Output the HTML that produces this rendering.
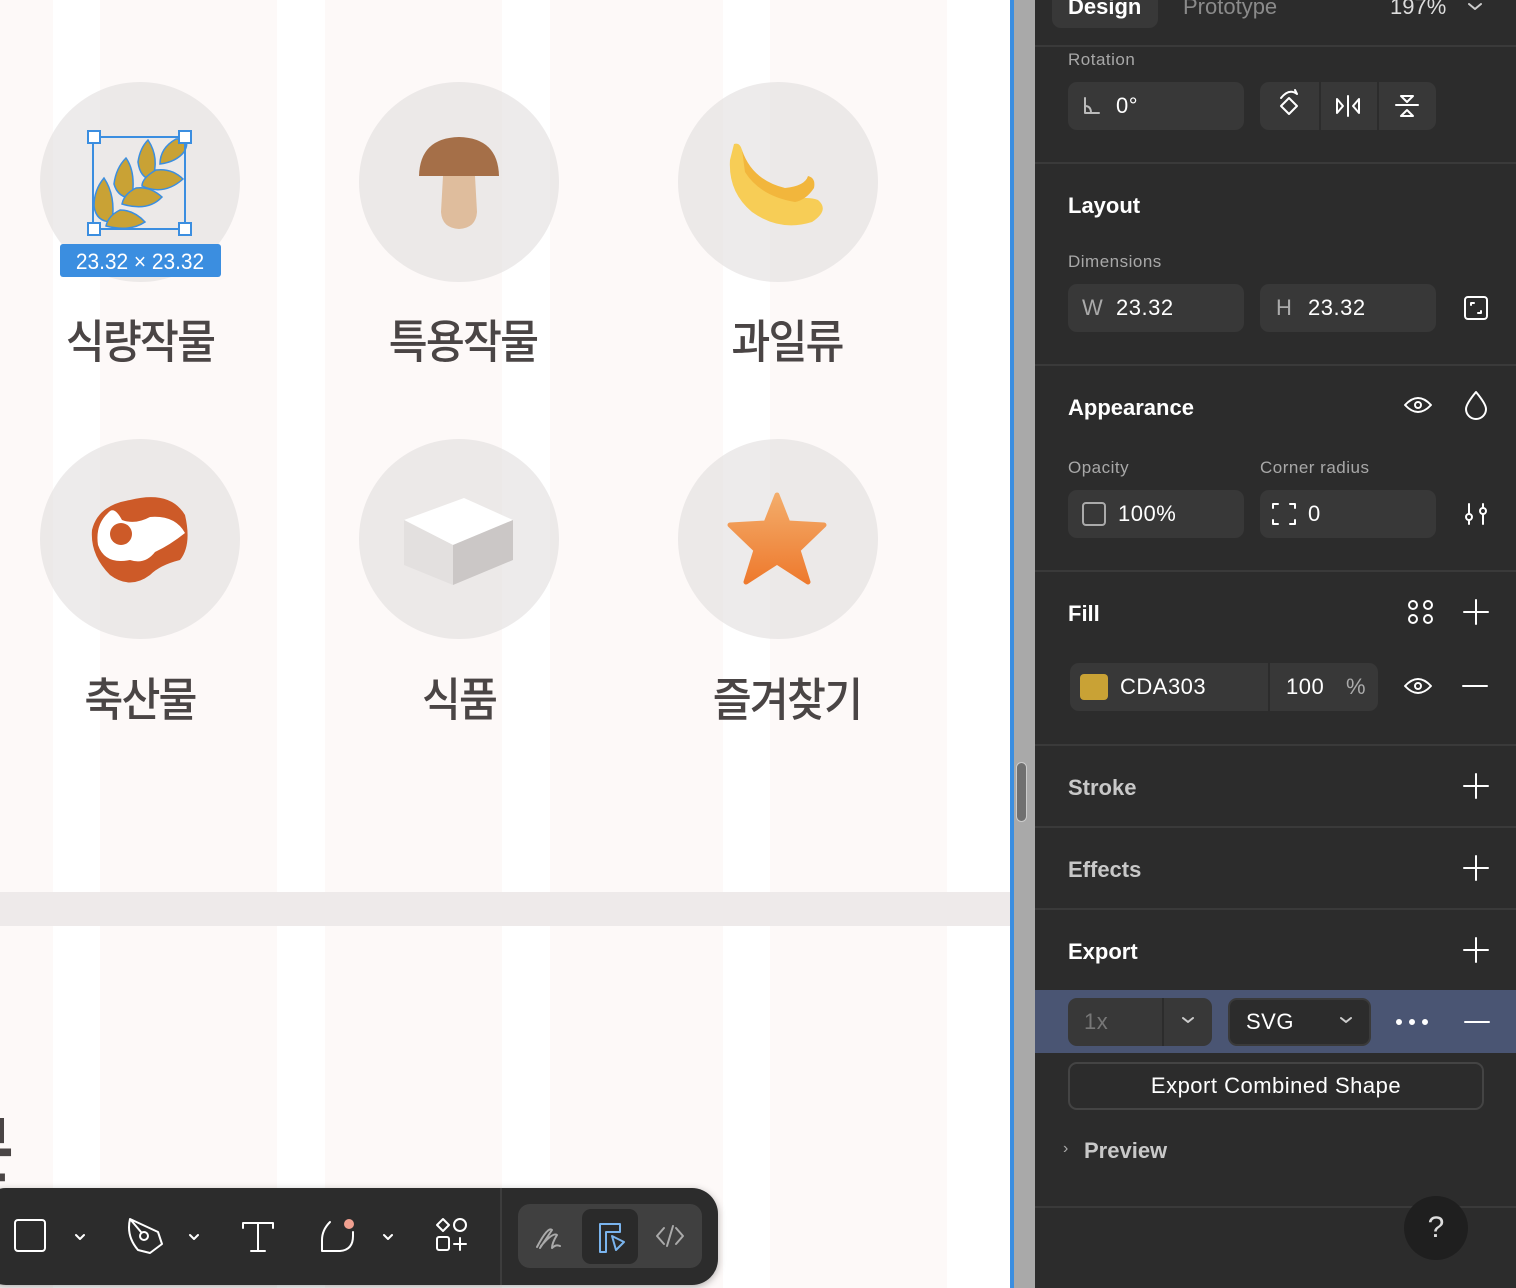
<!DOCTYPE html>
<html><head><meta charset="utf-8"><style>
*{margin:0;padding:0;box-sizing:border-box}
body{width:1516px;height:1288px;overflow:hidden;position:relative;background:#fdf9f8;font-family:"Liberation Sans",sans-serif}
.a{position:absolute}
.w{background:#fff;top:0;height:1288px}
.circ{position:absolute;width:200px;height:200px;border-radius:50%;background:rgba(225,222,222,.6)}
.kr{position:absolute;font-family:"Liberation Sans","Noto Sans CJK KR",sans-serif;font-size:46px;color:#4a4545;transform:scaleX(.92);text-align:center;width:300px;font-weight:500;letter-spacing:-2px}
.p{position:absolute;left:1035px;top:0;width:481px;height:1288px;background:#2c2c2c;color:#fff}
.hr{position:absolute;left:0;width:481px;height:2px;background:#3a3a3a}
.t{position:absolute;font-size:22px;font-weight:bold;color:#fff}
.lb{position:absolute;font-size:17px;color:#a8a8a8;letter-spacing:.5px}
.in{position:absolute;background:#383838;border-radius:9px;height:48px;font-size:22px;color:#fff;line-height:48px;letter-spacing:.5px}
svg{position:absolute;overflow:visible}
</style></head><body>
<div class="a w" style="left:53px;width:47px"></div>
<div class="a w" style="left:277px;width:48px"></div>
<div class="a w" style="left:502px;width:48px"></div>
<div class="a w" style="left:723px;width:47px"></div>
<div class="a w" style="left:947px;width:63px"></div>
<div class="a" style="left:0;top:892px;width:1010px;height:34px;background:#eeeaea"></div>

<div class="circ" style="left:40px;top:82px"></div>
<div class="circ" style="left:359px;top:82px"></div>
<div class="circ" style="left:678px;top:82px"></div>
<div class="circ" style="left:40px;top:439px"></div>
<div class="circ" style="left:359px;top:439px"></div>
<div class="circ" style="left:678px;top:439px"></div>

<svg style="left:0;top:0" width="1" height="1">
<g fill="#c9a235" stroke="#3b8ee0" stroke-width="1.5">
<path d="M176 139 Q192 138 184 152 Q176 162 160 164 Q160 148 176 139Z"/>
<path d="M148 140 Q160 158 152 180 Q140 178 138 162 Q140 148 148 140Z"/>
<path d="M183 179 Q172 168 156 170 Q142 178 142 186 Q164 196 183 179Z"/>
<path d="M126 158 Q136 172 132 198 Q118 198 114 184 Q116 168 126 158Z"/>
<path d="M162 197 Q150 186 136 188 Q124 194 122 204 Q148 212 162 197Z"/>
<path d="M104 178 Q116 196 112 222 Q96 222 94 206 Q94 190 104 178Z"/>
<path d="M145 222 Q134 210 120 210 Q108 216 106 226 Q130 232 145 222Z"/>
</g>
<rect x="93" y="137" width="92" height="92" fill="none" stroke="#3b8ee0" stroke-width="2"/>
<g fill="#fff" stroke="#3b8ee0" stroke-width="2"><rect x="88" y="131" width="12" height="12"/><rect x="179" y="131" width="12" height="12"/><rect x="88" y="223" width="12" height="12"/><rect x="179" y="223" width="12" height="12"/></g>
<rect x="60" y="244" width="161" height="33" rx="3" fill="#3b8ee0"/>
<text x="140" y="269" fill="#fff" font-size="22" text-anchor="middle" font-family="Liberation Sans" transform="translate(140 0) scale(.95 1) translate(-140 0)">23.32 × 23.32</text>
<path d="M419 176 Q420 138 459 137 Q498 138 499 176Z" fill="#a56f48"/>
<path d="M443 176 L475 176 L477 212 Q476 228 459 229 Q442 228 441 212Z" fill="#dfbd9d"/>
<path d="M734 144 Q740 142 742 150 Q748 188 790 200 Q808 196 818 200 Q830 210 812 222 Q780 232 752 212 Q728 192 730 160 Z" fill="#f7cd56"/>
<path d="M742 150 Q752 180 785 188 Q805 186 808 176 Q816 178 814 188 Q806 200 795 202 Q760 196 745 172Z" fill="#f2b63c"/>
<path d="M130 500 Q170 490 185 515 Q192 545 180 560 Q160 565 150 575 Q130 590 110 575 Q90 555 92 530 Q98 505 130 500Z" fill="#cd5a28"/>
<path d="M108 513 Q114 505 122 520 Q135 525 150 517 Q175 515 185 533 Q170 545 155 552 Q145 565 130 560 Q105 565 98 545 Q95 525 108 513Z" fill="#fff"/>
<circle cx="121" cy="534" r="11" fill="#cd5a28"/>
<path d="M404 520 L464 498 L513 520 L453 545Z" fill="#fff"/>
<path d="M404 520 L453 545 L453 585 L404 565Z" fill="#e3e0df"/>
<path d="M453 545 L513 520 L513 560 L453 585Z" fill="#cbc7c6"/>
<defs><linearGradient id="sg" x1="0" y1="0" x2="0" y2="1"><stop offset="0" stop-color="#f3ac6a"/><stop offset="1" stop-color="#ee7a2e"/></linearGradient></defs>
<path d="M777 495 L788 523 L824 525 L798 550 L808 582 L777 562 L746 582 L756 550 L730 525 L766 523Z" fill="url(#sg)" stroke="url(#sg)" stroke-width="5" stroke-linejoin="round"/>
</svg>

<div class="kr" style="left:-10px;top:306px">식량작물</div>
<div class="kr" style="left:313px;top:306px">특용작물</div>
<div class="kr" style="left:637px;top:306px">과일류</div>
<div class="kr" style="left:-10px;top:664px">축산물</div>
<div class="kr" style="left:309px;top:664px">식품</div>
<div class="kr" style="left:637px;top:664px">즐겨찾기</div>
<div class="kr" style="left:-180px;top:1092px;text-align:right;width:200px;font-size:72px;font-weight:bold">문</div>

<div class="a" style="left:-20px;top:1188px;width:738px;height:97px;background:#2c2c2c;border-radius:26px;box-shadow:0 2px 8px rgba(0,0,0,.3)"></div>
<div class="a" style="left:500px;top:1188px;width:2px;height:97px;background:#3d3d3d"></div>
<div class="a" style="left:518px;top:1204px;width:184px;height:64px;background:#404040;border-radius:12px"></div>
<div class="a" style="left:582px;top:1209px;width:56px;height:55px;background:#2a2a2a;border-radius:9px"></div>
<svg style="left:0;top:0" width="1" height="1" fill="none" stroke="#fff" stroke-width="2" stroke-linecap="round" stroke-linejoin="round">
<rect x="15" y="1220" width="30" height="31" rx="3"/>
<path d="M76 1235l4 4 4-4M190 1235l4 4 4-4M384 1235l4 4 4-4"/>
<path d="M130 1219 L158 1232 L162 1244 L150 1253 L138 1250 Q126 1236 130 1219Z M130 1219 L141 1232"/><circle cx="144" cy="1236" r="4"/>
<path d="M243 1223 H273 M243 1223 v5 M273 1223 v5 M258 1223 V1251 M251 1251 h14"/>
<path d="M330 1222 Q322 1230 322 1240 V1251 H340 Q353 1250 353 1236 V1232"/>
<circle cx="349" cy="1224" r="5" fill="#f0a090" stroke="none"/>
<path d="M443 1219 l6 6 -6 6 -6 -6z"/><circle cx="460" cy="1225" r="6"/><rect x="437" y="1237" width="12" height="13" rx="2"/><path d="M460 1238 v12 M454 1244 h12"/>
<path d="M537 1247 Q548 1226 552 1230 Q544 1242 540 1248 M541 1246 Q553 1232 557 1235 Q552 1243 552 1248 Q556 1244 560 1246" stroke="#aaa"/>
<path d="M600 1224 h20 v8 h-14 v20 h-6z" stroke="#7ab4ee"/><path d="M612 1236 L624 1242 L616 1250Z" stroke="#7ab4ee"/>
<path d="M664 1228 l-7 8 7 8 M676 1228 l7 8 -7 8 M673 1226 l-6 20" stroke="#aaa"/>
</svg>

<div class="a" style="left:1010px;top:0;width:4px;height:1288px;background:#3b8ee0"></div>
<div class="a" style="left:1014px;top:0;width:21px;height:1288px;background:#a9a9a9"></div>
<div class="a" style="left:1016px;top:762px;width:11px;height:60px;background:#707070;border:1px solid #ccc;border-radius:6px"></div>

<div class="p">
<div class="a" style="left:17px;top:-20px;width:106px;height:48px;background:#383838;border-radius:9px"></div>
<div class="t" style="left:33px;top:-6px">Design</div>
<div class="a" style="left:148px;top:-6px;font-size:22px;color:#8a8a8a">Prototype</div>
<div class="a" style="left:355px;top:-6px;font-size:22px;color:#ddd">197%</div>
<div class="hr" style="top:45px"></div>
<div class="lb" style="left:33px;top:50px">Rotation</div>
<div class="in" style="left:33px;top:82px;width:176px"><span style="position:absolute;left:48px">0°</span></div>
<div class="in" style="left:225px;top:82px;width:176px"></div>
<div class="a" style="left:284px;top:82px;width:2px;height:48px;background:#2c2c2c"></div>
<div class="a" style="left:342px;top:82px;width:2px;height:48px;background:#2c2c2c"></div>
<div class="hr" style="top:162px"></div>
<div class="t" style="left:33px;top:193px">Layout</div>
<div class="lb" style="left:33px;top:252px">Dimensions</div>
<div class="in" style="left:33px;top:284px;width:176px"><span style="position:absolute;left:14px;color:#aaa">W</span><span style="position:absolute;left:48px">23.32</span></div>
<div class="in" style="left:225px;top:284px;width:176px"><span style="position:absolute;left:16px;color:#aaa">H</span><span style="position:absolute;left:48px">23.32</span></div>
<div class="hr" style="top:364px"></div>
<div class="t" style="left:33px;top:395px">Appearance</div>
<div class="lb" style="left:33px;top:458px">Opacity</div>
<div class="lb" style="left:225px;top:458px">Corner radius</div>
<div class="in" style="left:33px;top:490px;width:176px"><span style="position:absolute;left:50px">100%</span></div>
<div class="in" style="left:225px;top:490px;width:176px"><span style="position:absolute;left:48px">0</span></div>
<div class="hr" style="top:570px"></div>
<div class="t" style="left:33px;top:601px">Fill</div>
<div class="in" style="left:35px;top:663px;width:308px"><span style="position:absolute;left:10px;top:11px;width:28px;height:26px;background:#c9a235;border-radius:4px"></span><span style="position:absolute;left:50px">CDA303</span><span style="position:absolute;left:198px;top:0;width:2px;height:48px;background:#2c2c2c"></span><span style="position:absolute;left:216px">100</span><span style="position:absolute;left:276px;color:#aaa">%</span></div>
<div class="hr" style="top:744px"></div>
<div class="t" style="left:33px;top:775px;color:#c8c8c8">Stroke</div>
<div class="hr" style="top:826px"></div>
<div class="t" style="left:33px;top:857px;color:#c8c8c8">Effects</div>
<div class="hr" style="top:908px"></div>
<div class="t" style="left:33px;top:939px">Export</div>
<div class="a" style="left:0;top:990px;width:481px;height:63px;background:#4a5573"></div>
<div class="in" style="left:33px;top:998px;width:144px;color:#777"><span style="position:absolute;left:16px">1x</span><span style="position:absolute;left:94px;top:0;width:2px;height:48px;background:#2c2c2c"></span></div>
<div class="in" style="left:193px;top:998px;width:143px;background:#2c2c2c;border:2px solid #3a3a3a;line-height:44px"><span style="position:absolute;left:16px">SVG</span></div>
<div class="a" style="left:33px;top:1062px;width:416px;height:48px;border:2px solid #444;border-radius:9px;text-align:center;line-height:44px;font-size:22px;letter-spacing:.5px">Export Combined Shape</div>
<div class="a" style="left:28px;top:1140px;color:#aaa;font-size:16px">›</div>
<div class="t" style="left:49px;top:1138px;color:#c8c8c8">Preview</div>
<div class="hr" style="top:1206px"></div>
<div class="a" style="left:369px;top:1196px;width:64px;height:64px;border-radius:50%;background:#1f1f1f;text-align:center;line-height:64px;font-size:30px;color:#ddd">?</div>
</div>

<svg style="left:0;top:0" width="1" height="1" fill="none" stroke="#fff" stroke-width="2" stroke-linecap="round" stroke-linejoin="round">
<path d="M1469 4l6 5 6-5M1341 1018l5 4 5-4M1183 1018l5 4 5-4" stroke="#ccc"/>
<path d="M1085 98 v15 h14 M1085 106 q6 0 6 7" stroke="#bbb"/>
<path d="M1289 98 l8 8 -8 8 -8 -8z M1281 98 q8 -10 16 -4 l-2 -4"/>
<path d="M1337 99 l6 7 -6 7z M1359 99 l-6 7 6 7z M1348 96 v20"/>
<path d="M1396 105 h22 M1401 96 h12 l-6 6z M1401 116 h12 l-6 -6z"/>
<rect x="1465" y="297" width="22" height="22" rx="3"/><path d="M1471 305 v-2 h3 M1481 311 v2 h-3"/>
<path d="M1405 405 q13 -14 26 0 q-13 14 -26 0z"/><circle cx="1418" cy="405" r="3"/>
<path d="M1476 392 q-10 12 -10 17 a10 10 0 0 0 20 0 q0 -5 -10 -17z"/>
<rect x="1083" y="503" width="22" height="22" rx="3" stroke="#aaa"/>
<path d="M1273 508 v-4 h5 M1290 504 h5 v4 M1295 520 v4 h-5 M1278 524 h-5 v-4"/>
<path d="M1469 504 v20 M1483 504 v20"/><circle cx="1469" cy="517" r="3" fill="#2c2c2c"/><circle cx="1483" cy="511" r="3" fill="#2c2c2c"/>
<circle cx="1413" cy="605" r="4"/><circle cx="1428" cy="605" r="4"/><circle cx="1413" cy="619" r="4"/><circle cx="1428" cy="619" r="4"/>
<path d="M1464 612 h24 M1476 600 v24 M1464 786 h24 M1476 774 v24 M1464 868 h24 M1476 856 v24 M1464 950 h24 M1476 938 v24 M1463 686 h24 M1465 1022 h24"/>
<path d="M1405 686 q13 -14 26 0 q-13 14 -26 0z"/><circle cx="1418" cy="686" r="3"/>
<circle cx="1399" cy="1022" r="2" fill="#fff"/><circle cx="1412" cy="1022" r="2" fill="#fff"/><circle cx="1425" cy="1022" r="2" fill="#fff"/>
</svg>
</body></html>
